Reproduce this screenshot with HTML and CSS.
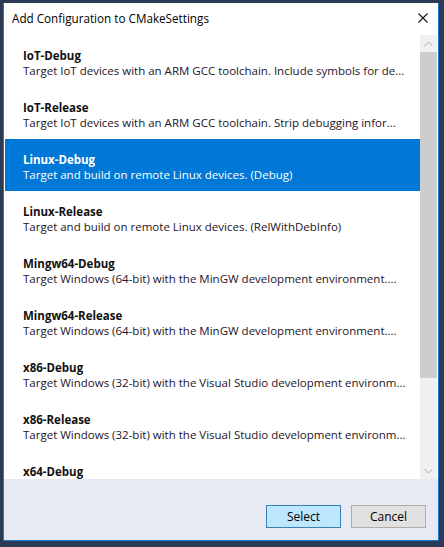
FILE: index.html
```html
<!DOCTYPE html>
<html>
<head>
<meta charset="utf-8">
<link rel="stylesheet" href="styles.css">
</head>
<body>
<div class="window">
  <div class="titlebar">
    <span class="title">Add Configuration to CMakeSettings</span>
    <svg class="close" width="10" height="10" viewBox="0 0 10 10"><path d="M0.5 0.5 L9.5 9.5 M9.5 0.5 L0.5 9.5" stroke="#111" stroke-width="1.1" fill="none"/></svg>
  </div>
  <div class="listarea">
    <div class="list">
      <div class="row"><div class="name">IoT-Debug</div><div class="desc">Target IoT devices with an ARM GCC toolchain. Include symbols for de...</div></div>
      <div class="row"><div class="name">IoT-Release</div><div class="desc">Target IoT devices with an ARM GCC toolchain. Strip debugging infor...</div></div>
      <div class="row selected"><div class="name">Linux-Debug</div><div class="desc">Target and build on remote Linux devices. (Debug)</div></div>
      <div class="row"><div class="name">Linux-Release</div><div class="desc">Target and build on remote Linux devices. (RelWithDebInfo)</div></div>
      <div class="row"><div class="name">Mingw64-Debug</div><div class="desc">Target Windows (64-bit) with the MinGW development environment....</div></div>
      <div class="row"><div class="name">Mingw64-Release</div><div class="desc">Target Windows (64-bit) with the MinGW development environment....</div></div>
      <div class="row"><div class="name">x86-Debug</div><div class="desc">Target Windows (32-bit) with the Visual Studio development environm...</div></div>
      <div class="row"><div class="name">x86-Release</div><div class="desc">Target Windows (32-bit) with the Visual Studio development environm...</div></div>
      <div class="row last"><div class="name">x64-Debug</div></div>
    </div>
    <div class="scrollbar">
      <div class="arrow"><svg width="9" height="6" viewBox="0 0 9 6"><path d="M0.5 5 L4.5 1 L8.5 5" stroke="#a6a6a6" stroke-width="1" fill="none"/></svg></div>
      <div class="thumb"></div>
      <div class="track"></div>
      <div class="arrow"><svg width="9" height="6" viewBox="0 0 9 6"><path d="M0.5 1 L4.5 5 L8.5 1" stroke="#a6a6a6" stroke-width="1" fill="none"/></svg></div>
    </div>
  </div>
  <div class="footer">
    <button class="btn primary">Select</button>
    <button class="btn">Cancel</button>
  </div>
</div>
</body>
</html>
```
FILE: styles.css
```css
html, body {
  margin: 0;
  padding: 0;
}
body {
  background: #2b3a55;
  padding: 3px 0 0 3px;
  height: 547px;
  box-sizing: border-box;
  font-family: "Open Sans", "Noto Sans", sans-serif;
  font-size: 11.5px;
  color: #1b1b1b;
}
.window {
  width: 436px;
  height: 538px;
  box-sizing: border-box;
  border: 1px solid #1b78cc;
  border-top: none;
  background: #fff;
  display: flex;
  flex-direction: column;
}
.titlebar {
  height: 32px;
  display: flex;
  align-items: center;
  justify-content: space-between;
  padding: 0 10px 0 8px;
  flex: none;
}
.title {
  font-size: 11.7px;
  color: #000;
  margin-top: -2px;
}
.close {
  margin-top: -2px;
}
.listarea {
  height: 444px;
  display: flex;
  margin: 0 0 0 1px;
  flex: none;
}
.list {
  width: 415px;
  overflow: hidden;
}
.row {
  height: 52px;
  box-sizing: border-box;
  padding: 13px 8px 0 18px;
  line-height: 15px;
}
.row.last {
  height: 28px;
}
.row .name {
  font-weight: 700;
  color: #111;
}
.row .desc {
  white-space: nowrap;
  overflow: hidden;
  text-overflow: ellipsis;
  color: #1e1428;
}
.row.selected {
  background: #0078d7;
}
.row.selected .name,
.row.selected .desc {
  color: #fff;
}
.scrollbar {
  width: 17px;
  background: #f0f0f0;
  display: flex;
  flex-direction: column;
}
.arrow {
  height: 17px;
  display: flex;
  align-items: center;
  justify-content: center;
  flex: none;
}
.thumb {
  height: 326px;
  background: #cdcdcd;
  flex: none;
}
.track {
  flex: 1;
}
.footer {
  flex: 1;
  background: #e7eaf4;
  display: flex;
  justify-content: flex-end;
  align-items: flex-end;
  gap: 10px;
  padding: 0 12px 12px 0;
}
.btn {
  width: 75px;
  height: 23px;
  box-sizing: border-box;
  border: 1px solid #adadad;
  background: #e1e1e1;
  font-family: "Open Sans", "Noto Sans", sans-serif;
  font-size: 12px;
  color: #000;
  padding: 0;
  margin: 0;
}
.btn.primary {
  background: #bee6fd;
  border-color: #3c7fb1;
}
```
